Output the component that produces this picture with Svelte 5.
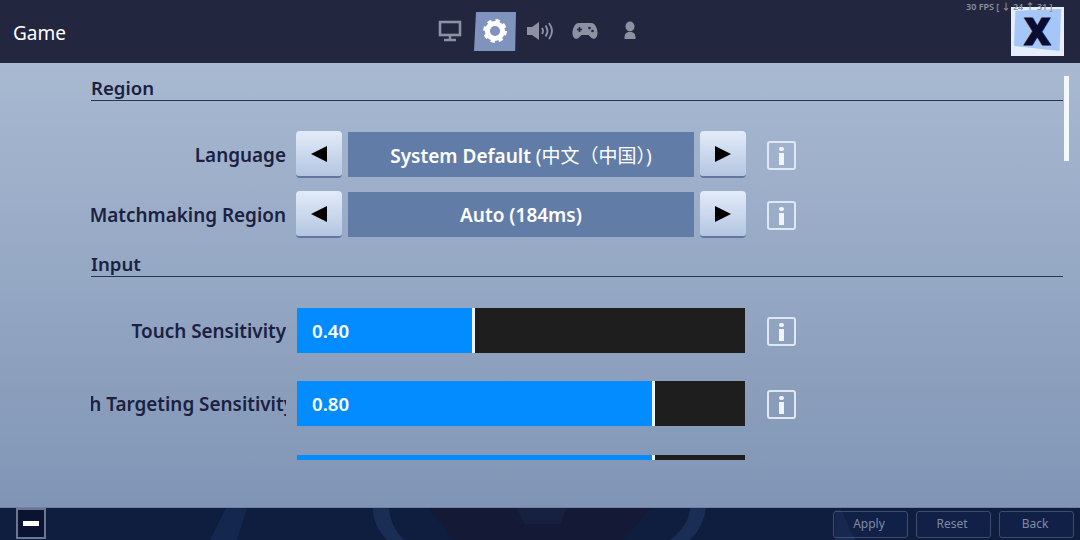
<script>
  const tabs = ['monitor', 'gear', 'sound', 'pad', 'person'];
  const regionRows = [
    { label: 'Language', value: 'System Default', extra: ' (中文（中国）)' },
    { label: 'Matchmaking Region', value: 'Auto (184ms)', extra: '' }
  ];
  const sliders = [
    { label: 'Touch Sensitivity', value: '0.40', pct: 39 },
    { label: 'Touch Targeting Sensitivity', value: '0.80', pct: 79.3, clip: true }
  ];
  const footerButtons = ['Apply', 'Reset', 'Back'];
</script>

<div class="page">
  <header class="topbar">
    <h1 class="title">Game</h1>
    <nav class="tabs">
      {#each tabs as tab}
        <div class="tab" class:active={tab === 'gear'}>
          {#if tab === 'monitor'}
            <svg width="24" height="22" viewBox="0 0 24 22">
              <rect x="2" y="2" width="20" height="13" fill="none" stroke="#8d92a3" stroke-width="2.6" />
              <path d="M12 15v4M6 20h12" stroke="#8d92a3" stroke-width="2.4" fill="none" />
            </svg>
          {:else if tab === 'gear'}
            <svg width="26" height="26" viewBox="0 0 26 26">
              <circle cx="13" cy="13" r="7.6" fill="none" stroke="#fff" stroke-width="5" />
              <circle cx="13" cy="13" r="10.4" fill="none" stroke="#fff" stroke-width="3" stroke-dasharray="4.2 4" />
            </svg>
          {:else if tab === 'sound'}
            <svg width="28" height="20" viewBox="0 0 28 20">
              <path d="M1 6h5l7-5v18l-7-5H1z" fill="#8d92a3" />
              <path d="M16 7q2 3 0 6M19.500 4.500q4 5.500 0 11M23 2q6 8 0 16" fill="none" stroke="#8d92a3" stroke-width="1.900" />
            </svg>
          {:else if tab === 'pad'}
            <svg width="26" height="18" viewBox="0 0 26 18">
              <path d="M7 1h12c4 0 6.500 5 6.500 10 0 5-3.500 7-6 5l-3-3h-7l-3 3c-2.500 2-6 0-6-5C.5 6 3 1 7 1z" fill="#8d92a3" />
              <path d="M5 7.500h5M7.500 5v5" stroke="#23263f" stroke-width="1.600" />
              <circle cx="17.500" cy="6" r="1.300" fill="#23263f" />
              <circle cx="20.500" cy="9" r="1.300" fill="#23263f" />
            </svg>
          {:else}
            <svg width="14" height="19" viewBox="0 0 14 19">
              <ellipse cx="7" cy="5.500" rx="4.500" ry="5" fill="#8d92a3" />
              <path d="M1.500 18c0-5 1-7 5.500-7s5.500 2 5.500 7z" fill="#8d92a3" />
            </svg>
          {/if}
        </div>
      {/each}
    </nav>
    <button class="close"><span>X</span></button>
  </header>
  <div class="fps">30 FPS [ ↓ 24 ↑ 31 ]</div>

  <main class="content">
    <div class="scroller">
      <section>
        <h2 class="heading first">Region</h2>
        {#each regionRows as row}
          <div class="row option">
            <div class="label">{row.label}</div>
            <div class="stepper">
              <button class="arrow"><i class="tri left"></i></button>
              <div class="value"><span>{row.value}<em>{row.extra}</em></span></div>
              <button class="arrow"><i class="tri right"></i></button>
            </div>
            <div class="info"><i></i><b></b></div>
          </div>
        {/each}
      </section>
      <section>
        <h2 class="heading">Input</h2>
        {#each sliders as row}
          <div class="row slider-row">
            <div class="label" class:clip={row.clip}><span>{row.label}</span></div>
            <div class="slider">
              <div class="fill" style="width: {row.pct}%">{row.value}</div>
              <div class="thumb"></div>
            </div>
            <div class="info"><i></i><b></b></div>
          </div>
        {/each}
        <div class="row slider-row partial">
          <div></div>
          <div class="slider">
            <div class="fill" style="width: 79.3%"></div>
            <div class="thumb"></div>
          </div>
        </div>
      </section>
    </div>
    <div class="scrollbar"></div>
  </main>

  <footer class="bottombar">
    <svg class="backdrop" width="1080" height="32" viewBox="0 0 1080 32">
      <path d="M429 0h221l-27 32H453z" fill="#141a36" />
      <path d="M516 0h51l-7 16h-35z" fill="#16213f" />
      <path d="M226 0h21l-10 32h-27z" fill="#14274f" />
      <path d="M373 0h16q1 18 15 32h-17q-14-14-14-32z" fill="#1a2d55" />
      <path d="M690 0h16q-2 18-16 32h-20q19-14 20-32z" fill="#1a2d55" />
      <path d="M835 2h6l14 30h-20z" fill="#1b2c52" />
    </svg>
    <button class="minimize"><i></i></button>
    <div class="actions">
      {#each footerButtons as label}
        <button class="action">{label}</button>
      {/each}
    </div>
  </footer>
</div>

<style>
  :global(body) {
    margin: 0;
    background: #0e1b3a;
  }

  .page {
    position: relative;
    width: 1080px;
    height: 540px;
    display: flex;
    flex-direction: column;
    overflow: hidden;
    font-family: "Noto Sans", "Noto Sans CJK SC", sans-serif;
  }

  .topbar {
    height: 63px;
    flex: none;
    box-sizing: border-box;
    background: #23263f;
    display: flex;
    align-items: flex-start;
    padding: 7px 16px 0 13px;
    position: relative;
  }

  .title {
    margin: 13px 0 0;
    color: #fff;
    font-size: 19px;
    line-height: 26px;
    font-weight: 400;
    flex: 1;
  }

  .tabs {
    display: flex;
    position: absolute;
    left: 429px;
    top: 12px;
  }

  .tab {
    width: 42px;
    height: 39px;
    margin-right: 3px;
    display: flex;
    align-items: center;
    justify-content: center;
    padding-bottom: 2px;
    box-sizing: border-box;
  }

  .tab.active {
    background: #7f93bd;
    clip-path: polygon(2px 0, 100% 0, 98% 100%, 0 100%);
  }

  .close {
    width: 53px;
    height: 49px;
    padding: 0;
    border: 0;
    background: #e6eefc;
    position: relative;
    display: flex;
    align-items: center;
    justify-content: center;
  }

  .close::before {
    content: "";
    position: absolute;
    inset: 2px 3px 5px 3px;
    background: #a6c6f7;
    clip-path: polygon(3% 4%, 100% 0, 97% 100%, 0 88%);
  }

  .close span {
    position: relative;
    top: -1px;
    color: #0a0c30;
    font-family: "Noto Sans", sans-serif;
    font-size: 37px;
    line-height: 1;
    font-weight: 900;
    -webkit-text-stroke: 1px #0a0c30;
  }

  .fps {
    position: absolute;
    left: 966px;
    top: 1px;
    font-size: 9px;
    line-height: 12px;
    font-weight: 600;
    color: #8b8f9f;
    white-space: nowrap;
  }

  .content {
    flex: 1;
    position: relative;
    background: linear-gradient(180deg, #a8b9d1 0%, #8095b5 100%);
    border-bottom: 1px solid #6f81a3;
    box-sizing: border-box;
    min-height: 0;
  }

  .scroller {
    height: 397px;
    overflow: hidden;
    margin: 0 17px 0 91px;
  }

  .heading {
    margin: 0;
    font-size: 18.600px;
    line-height: 24px;
    font-weight: 600;
    color: #1b2140;
    border-bottom: 1px solid #2c3350;
    padding-bottom: 0;
    height: 24px;
  }

  .heading.first {
    margin-top: 13px;
    margin-bottom: 30px;
  }

  section + section .heading {
    margin-top: 16px;
    margin-bottom: 31px;
  }

  .row {
    display: grid;
    grid-template-columns: 195px 450px 50px;
    column-gap: 10px;
    align-items: center;
  }

  .option {
    height: 45px;
    margin-bottom: 15px;
  }

  .option:last-of-type {
    margin-bottom: 0;
  }

  .slider-row {
    height: 45px;
    margin-bottom: 28px;
  }

  .slider-row.partial {
    margin-top: 29px;
  }

  .label {
    display: flex;
    justify-content: flex-end;
    font-size: 18.900px;
    line-height: 24px;
    font-weight: 600;
    color: #1b2140;
    white-space: nowrap;
    overflow: hidden;
  }

  .label span {
    flex: none;
  }

  .label.clip span {
    margin-right: -8px;
  }

  .stepper {
    display: flex;
    align-items: center;
    justify-content: space-between;
  }

  .arrow {
    width: 46px;
    height: 47px;
    padding: 0;
    border: 0;
    border-bottom: 2px solid #62779f;
    border-radius: 4px;
    background: linear-gradient(180deg, #e3ebf8 0%, #b3c6e2 100%);
    display: flex;
    align-items: center;
    justify-content: center;
  }

  .tri {
    width: 0;
    height: 0;
    border-top: 8px solid transparent;
    border-bottom: 8px solid transparent;
  }

  .tri.left {
    border-right: 16px solid #000;
  }

  .tri.right {
    border-left: 16px solid #000;
  }

  .value {
    width: 346px;
    height: 45px;
    background: #617da7;
    color: #fff;
    font-size: 19px;
    font-weight: 600;
    display: flex;
    align-items: center;
    justify-content: center;
  }

  .value em {
    font-style: normal;
    font-weight: 400;
  }

  .info {
    width: 25px;
    margin: 1px 0 0 11px;
    border: 2px solid #dfe7f3;
    border-radius: 3px;
    display: flex;
    flex-direction: column;
    align-items: center;
    gap: 2px;
    padding-top: 4px;
    box-sizing: content-box;
    height: 21px;
  }

  .info i {
    width: 5px;
    height: 4px;
    border-radius: 2px;
    background: #f1f5fb;
  }

  .info b {
    width: 5px;
    height: 12px;
    background: #f1f5fb;
  }

  .slider {
    width: 448px;
    margin-left: 1px;
    height: 45px;
    background: #1e1e1e;
    display: flex;
  }

  .fill {
    background: #038cff;
    color: #fff;
    font-size: 18.600px;
    font-weight: 600;
    display: flex;
    align-items: center;
    padding-left: 15px;
    box-sizing: border-box;
  }

  .thumb {
    width: 3px;
    background: #eef3fb;
  }

  .scrollbar {
    position: absolute;
    top: 13px;
    right: 11px;
    width: 5px;
    height: 85px;
    background: #f4f7fc;
  }

  .bottombar {
    height: 32px;
    flex: none;
    position: relative;
    background: #0f1d3e;
    display: flex;
    justify-content: space-between;
    padding: 0 6px 0 16px;
    box-sizing: border-box;
  }

  .backdrop {
    position: absolute;
    left: 0;
    top: 0;
  }

  .minimize {
    position: relative;
    width: 30px;
    height: 31px;
    padding: 0;
    background: #0a1330;
    border: 2px solid #6d7590;
    display: flex;
    align-items: center;
    justify-content: center;
  }

  .minimize i {
    width: 16px;
    height: 5px;
    background: #fff;
  }

  .actions {
    position: relative;
    display: flex;
    gap: 8px;
    padding-top: 3px;
  }

  .action {
    width: 75px;
    height: 27px;
    padding: 0 3px 2px 0;
    background: rgba(20, 36, 78, 0.5);
    border: 1px solid #3d4c70;
    border-radius: 3px;
    color: #7f8ba6;
    font-family: inherit;
    font-size: 12px;
  }
</style>
